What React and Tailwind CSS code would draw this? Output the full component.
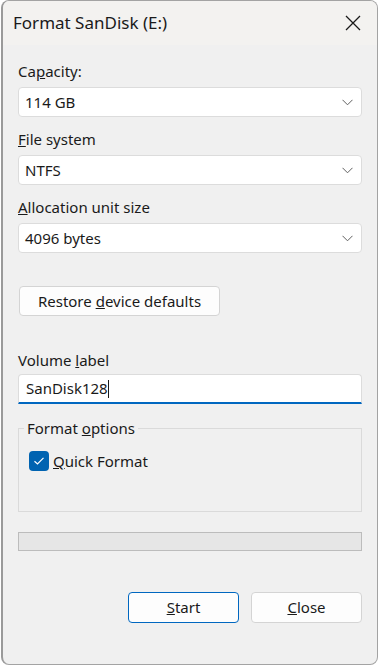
import React from 'react';

const font = { fontFamily: '"Noto Sans", "Open Sans", sans-serif' };

function Chevron() {
  return (
    <svg width="11" height="7" viewBox="0 0 11 7" className="shrink-0">
      <path d="M0.5 0.8 L5.5 5.8 L10.5 0.8" fill="none" stroke="#606060" strokeWidth="1" />
    </svg>
  );
}

function Select({ value }) {
  return (
    <div className="mt-[6px] h-[30px] flex items-center justify-between bg-white border border-[#dcdcdc] rounded-[4px] pl-[6px] pr-[8px] text-[15px] text-[#1a1a1a]">
      <span>{value}</span>
      <Chevron />
    </div>
  );
}

function Label({ children, className = '' }) {
  return <div className={`h-[20px] leading-[20px] text-[15px] text-[#1a1a1a] ${className}`}>{children}</div>;
}

export default function App() {
  return (
    <div className="w-[380px] h-[669px] bg-white overflow-hidden" style={font}>
      <div className="ml-[1px] w-[377px] h-[665px] flex flex-col rounded-[8px] border border-[#a3a3a3] border-l-2 border-l-[#9a9a9a] bg-[#f0f0f0] overflow-hidden">
        {/* title bar */}
        <div className="h-[44px] shrink-0 flex items-center justify-between bg-[#f3f2f0] pl-[10px] pr-[16px]">
          <span className="text-[17px] text-[#1a1a1a] -mt-[1px]">Format SanDisk (E:)</span>
          <svg width="16" height="16" viewBox="0 0 16 16">
            <path d="M1 1 L15 15 M15 1 L1 15" stroke="#1a1a1a" strokeWidth="1.3" />
          </svg>
        </div>

        <div className="flex flex-col pl-[15px] pr-[15px]">
          <Label className="mt-[16px]">Ca<u>p</u>acity:</Label>
          <Select value="114 GB" />

          <Label className="mt-[12px]"><u>F</u>ile system</Label>
          <Select value="NTFS" />

          <Label className="mt-[12px]"><u>A</u>llocation unit size</Label>
          <Select value="4096 bytes" />

          <button className="mt-[33px] ml-[1px] w-[201px] h-[30px] bg-[#fdfdfd] border border-[#d4d4d4] rounded-[4px] text-[15px] text-[#1a1a1a] text-center">
            Restore <u>d</u>evice defaults
          </button>

          <Label className="mt-[34px]">Volume <u>l</u>abel</Label>
          <div className="mt-[4px] h-[30px] flex items-center bg-white border border-[#dcdcdc] border-b-2 border-b-[#0067c0] rounded-t-[4px] pl-[7px] text-[15px] text-[#1a1a1a]">
            <span>SanDisk128</span>
            <span className="w-[1px] h-[18px] bg-[#1a1a1a]" />
          </div>

          <fieldset className="mt-[14px] h-[94px] border border-[#dadada] px-0 pb-0">
            <legend className="ml-[5px] px-[3px] h-[20px] leading-[20px] text-[15px] text-[#1a1a1a]">
              Format <u>o</u>ptions
            </legend>
            <div className="mt-[13px] ml-[10px] flex items-center gap-[4px]">
              <div className="w-[20px] h-[20px] rounded-[4px] bg-[#0063b1] flex items-center justify-center">
                <svg width="12" height="10" viewBox="0 0 12 10">
                  <path d="M1.5 5.2 L4.5 8 L10.5 1.8" fill="none" stroke="white" strokeWidth="1.2" />
                </svg>
              </div>
              <span className="text-[15px] leading-[20px] text-[#1a1a1a]"><u>Q</u>uick Format</span>
            </div>
          </fieldset>

          <div className="mt-[20px] h-[19px] border border-[#bcbcbc] bg-[#e6e6e6]" />

          <div className="mt-[41px] flex justify-end gap-[12px]">
            <button className="w-[111px] h-[31px] bg-[#fdfdfd] border border-[#0067c0] rounded-[4px] text-[15px] text-[#1a1a1a]">
              <u>S</u>tart
            </button>
            <button className="w-[111px] h-[31px] bg-[#fdfdfd] border border-[#d4d4d4] rounded-[4px] text-[15px] text-[#1a1a1a]">
              <u>C</u>lose
            </button>
          </div>
        </div>
      </div>
    </div>
  );
}
